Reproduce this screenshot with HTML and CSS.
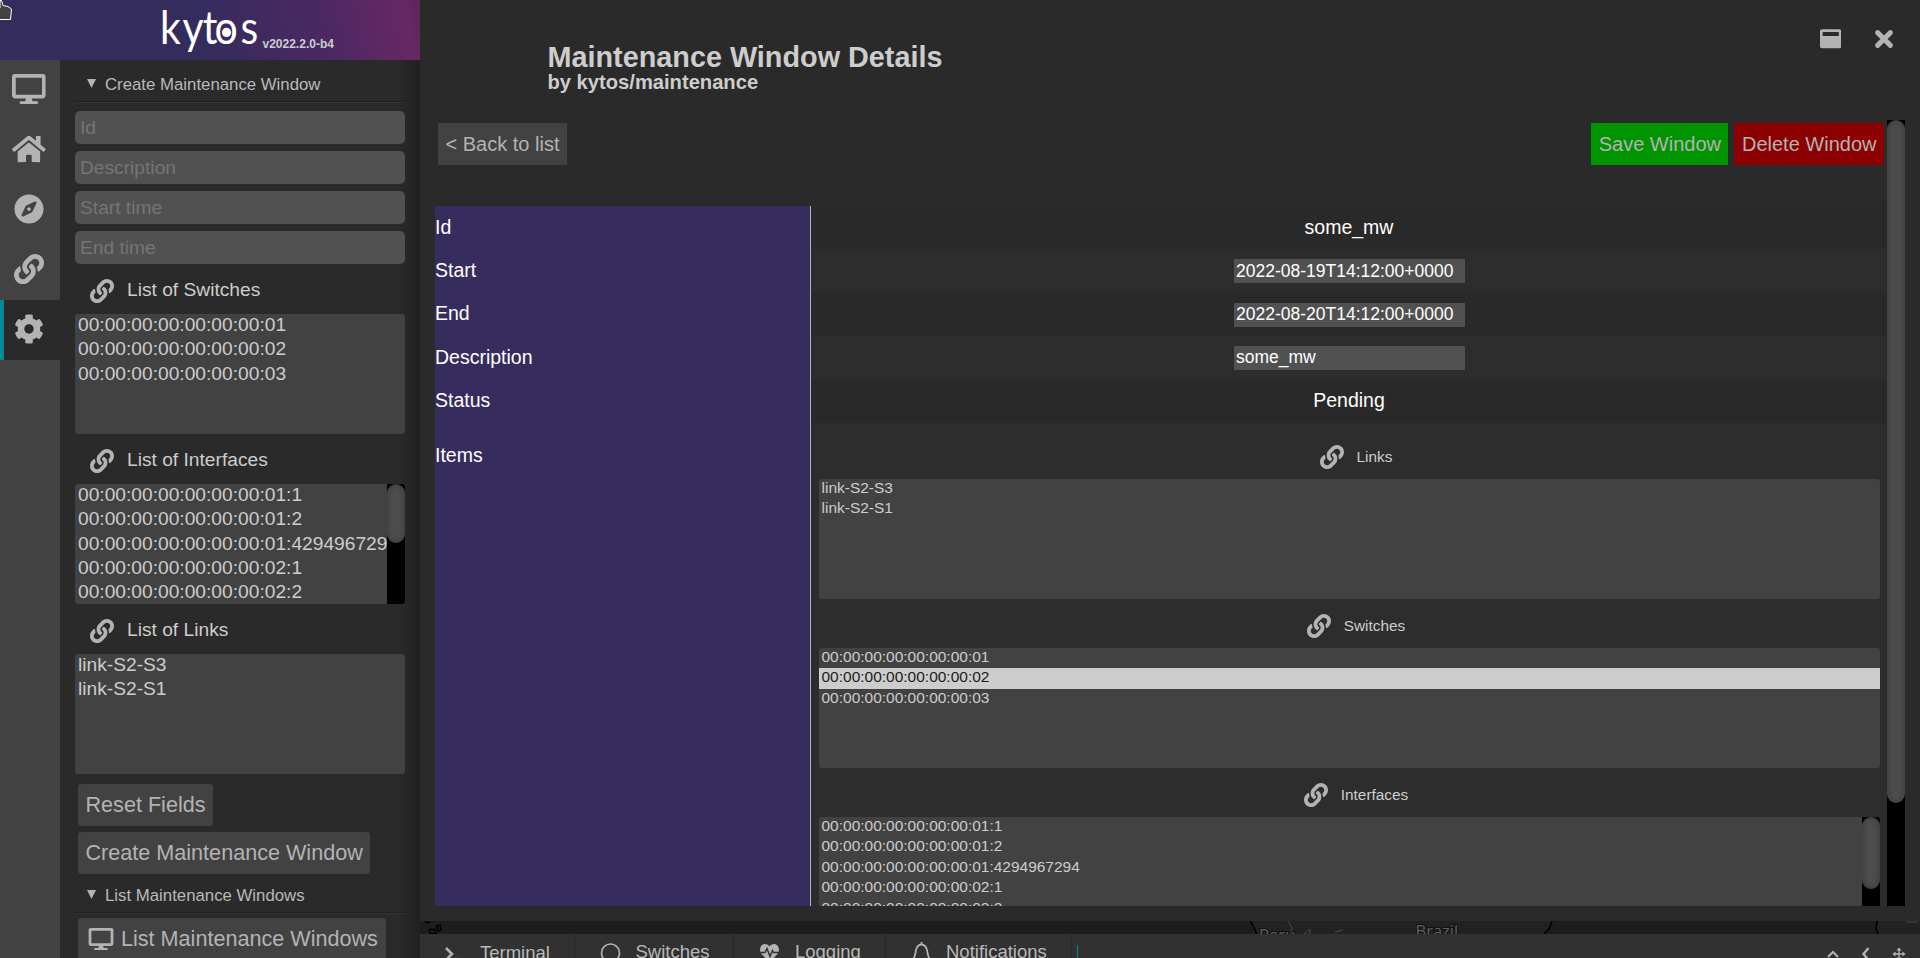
FILE: index.html
```html
<!DOCTYPE html>
<html lang="en">
<head>
<meta charset="utf-8">
<title>Kytos</title>
<link rel="stylesheet" href="styles.css">
</head>
<body>
<svg class="defs" width="0" height="0">
  <symbol id="desktop" viewBox="0 0 576 512"><path d="M528 0H48C21.500 0 0 21.500 0 48v320c0 26.500 21.500 48 48 48h192l-16 48h-72c-13.300 0-24 10.700-24 24s10.700 24 24 24h272c13.300 0 24-10.700 24-24s-10.700-24-24-24h-72l-16-48h192c26.500 0 48-21.500 48-48V48c0-26.500-21.500-48-48-48zm-16 352H64V64h448v288z"/></symbol>
  <symbol id="home" viewBox="0 0 576 512"><path d="M280.37 148.26L96 300.11V464a16 16 0 0 0 16 16l112.06-.29a16 16 0 0 0 15.92-16V368a16 16 0 0 1 16-16h64a16 16 0 0 1 16 16v95.64a16 16 0 0 0 16 16.05L464 480a16 16 0 0 0 16-16V300L295.67 148.26a12.19 12.19 0 0 0-15.3 0zM571.6 251.47L488 182.56V44.05a12 12 0 0 0-12-12h-56a12 12 0 0 0-12 12v72.61L318.47 43a48 48 0 0 0-61 0L4.34 251.47a12 12 0 0 0-1.6 16.9l25.5 31A12 12 0 0 0 45.15 301l235.22-193.74a12.19 12.19 0 0 1 15.3 0L530.9 301a12 12 0 0 0 16.9-1.6l25.5-31a12 12 0 0 0-1.7-16.93z"/></symbol>
  <symbol id="compass" viewBox="0 0 496 512"><path d="M225.38 233.37c-12.5 12.5-12.5 32.76 0 45.25 12.49 12.5 32.76 12.5 45.25 0 12.5-12.5 12.5-32.76 0-45.25-12.5-12.49-32.76-12.49-45.25 0zM248 8C111.03 8 0 119.03 0 256s111.03 248 248 248 248-111.03 248-248S384.97 8 248 8zm126.14 148.05L308.17 300.4a31.938 31.938 0 0 1-15.77 15.77l-144.34 65.97c-16.65 7.61-33.81-9.55-26.2-26.2l65.98-144.35a31.938 31.938 0 0 1 15.77-15.77l144.34-65.97c16.65-7.6 33.8 9.55 26.19 26.2z"/></symbol>
  <symbol id="link" viewBox="0 0 512 512"><path d="M326.612 185.391c59.747 59.809 58.927 155.698.36 214.59-.11.12-.24.25-.36.37l-67.2 67.2c-59.27 59.27-155.699 59.262-214.96 0-59.27-59.26-59.27-155.7 0-214.96l37.106-37.106c9.84-9.84 26.786-3.3 27.294 10.606.648 17.722 3.826 35.527 9.69 52.721 1.986 5.822.567 12.262-3.783 16.612l-13.087 13.087c-28.026 28.026-28.905 73.66-1.155 101.96 28.024 28.579 74.086 28.749 102.325.51l67.2-67.19c28.191-28.191 28.073-73.757 0-101.83-3.701-3.694-7.429-6.564-10.341-8.569a16.037 16.037 0 0 1-6.947-12.606c-.396-10.567 3.348-21.456 11.698-29.806l21.054-21.055c5.521-5.521 14.182-6.199 20.584-1.731a152.482 152.482 0 0 1 20.522 17.197zM467.547 44.449c-59.261-59.262-155.69-59.27-214.96 0l-67.2 67.2c-.12.12-.25.25-.36.37-58.566 58.892-59.387 154.781.36 214.59a152.454 152.454 0 0 0 20.521 17.196c6.402 4.468 15.064 3.789 20.584-1.731l21.054-21.055c8.35-8.35 12.094-19.239 11.698-29.806a16.037 16.037 0 0 0-6.947-12.606c-2.912-2.005-6.64-4.875-10.341-8.569-28.073-28.073-28.191-73.639 0-101.83l67.2-67.19c28.239-28.239 74.3-28.069 102.325.51 27.75 28.3 26.872 73.934-1.155 101.96l-13.087 13.087c-4.35 4.35-5.769 10.79-3.783 16.612 5.864 17.194 9.042 34.999 9.69 52.721.509 13.906 17.454 20.446 27.294 10.606l37.106-37.106c59.271-59.259 59.271-155.699.001-214.959z"/></symbol>
  <symbol id="cog" viewBox="0 0 512 512"><path d="M487.4 315.7l-42.6-24.6c4.3-23.2 4.3-47 0-70.2l42.6-24.6c4.9-2.8 7.1-8.6 5.5-14-11.1-35.6-30-67.8-54.7-94.6-3.8-4.1-10-5.1-14.8-2.3L380.8 110c-17.9-15.4-38.5-27.3-60.8-35.1V25.8c0-5.6-3.9-10.5-9.4-11.7-36.7-8.2-74.3-7.8-109.2 0-5.5 1.2-9.4 6.1-9.4 11.7V75c-22.2 7.9-42.8 19.8-60.8 35.1L88.7 85.5c-4.9-2.8-11-1.9-14.8 2.3-24.7 26.7-43.6 58.9-54.7 94.6-1.7 5.4.6 11.2 5.5 14L67.3 221c-4.3 23.2-4.3 47 0 70.2l-42.6 24.6c-4.9 2.8-7.1 8.6-5.5 14 11.1 35.6 30 67.8 54.7 94.6 3.8 4.1 10 5.1 14.8 2.3l42.6-24.6c17.9 15.4 38.5 27.3 60.8 35.1v49.2c0 5.6 3.9 10.5 9.4 11.7 36.7 8.2 74.3 7.8 109.2 0 5.5-1.200 9.4-6.1 9.4-11.7v-49.2c22.2-7.9 42.8-19.8 60.8-35.1l42.6 24.6c4.9 2.8 11 1.9 14.8-2.3 24.7-26.7 43.6-58.9 54.7-94.6 1.5-5.500-.7-11.3-5.600-14.100zM256 336c-44.1 0-80-35.9-80-80s35.9-80 80-80 80 35.9 80 80-35.9 80-80 80z"/></symbol>
  <symbol id="window" viewBox="0 0 512 512"><path d="M464 32H48C21.500 32 0 53.500 0 80v352c0 26.500 21.500 48 48 48h416c26.500 0 48-21.500 48-48V80c0-26.500-21.500-48-48-48zm-16 160H64v-84c0-6.600 5.400-12 12-12h360c6.600 0 12 5.400 12 12v84z"/></symbol>
  <symbol id="times" viewBox="0 0 16 16"><path d="M2.900 2.900L13.100 13.100M13.100 2.900L2.900 13.100" fill="none" stroke="currentColor" stroke-width="4" stroke-linecap="round"/></symbol>
</svg>

<div class="app">
  <aside class="side">
    <header class="brand">
      <svg class="logo" viewBox="0 0 100 60" width="100" height="60">
        <text class="wordmark" transform="scale(.9 1)" x="0 25 47.500 60.700 89.500" y="43.500">kytos</text>
        <circle cx="66.500" cy="32.400" r="4.600"/>
      </svg>
      <span class="version">v2022.2.0-b4</span>
    </header>
    <div class="side-body">
      <nav class="rail">
        <a class="rail-item"><svg class="rail-wide"><use href="#desktop"/></svg></a>
        <a class="rail-item"><svg class="rail-wide"><use href="#home"/></svg></a>
        <a class="rail-item"><svg class="rail-icon"><use href="#compass"/></svg></a>
        <a class="rail-item"><svg class="rail-icon"><use href="#link"/></svg></a>
        <a class="rail-item active"><svg class="rail-icon"><use href="#cog"/></svg></a>
      </nav>
      <section class="toolbar">
        <h3 class="fold"><svg class="caret" viewBox="0 0 9 9"><path d="M0 0h9L4.500 9z"/></svg>Create Maintenance Window</h3>
        <div class="fields">
          <input class="field" placeholder="Id">
          <input class="field" placeholder="Description">
          <input class="field" placeholder="Start time">
          <input class="field" placeholder="End time">
        </div>
        <div class="label"><svg class="link-icon"><use href="#link"/></svg>List of Switches</div>
        <div class="list big">
          <div class="opts"><div>00:00:00:00:00:00:00:01</div><div>00:00:00:00:00:00:00:02</div><div>00:00:00:00:00:00:00:03</div></div>
        </div>
        <div class="label"><svg class="link-icon"><use href="#link"/></svg>List of Interfaces</div>
        <div class="list big">
          <div class="opts"><div>00:00:00:00:00:00:00:01:1</div><div>00:00:00:00:00:00:00:01:2</div><div>00:00:00:00:00:00:00:01:4294967294</div><div>00:00:00:00:00:00:00:02:1</div><div>00:00:00:00:00:00:00:02:2</div></div>
          <div class="track"><div class="thumb thumb-side"></div></div>
        </div>
        <div class="label"><svg class="link-icon"><use href="#link"/></svg>List of Links</div>
        <div class="list big">
          <div class="opts"><div>link-S2-S3</div><div>link-S2-S1</div></div>
        </div>
        <div class="actions">
          <button class="btn">Reset Fields</button>
          <button class="btn">Create Maintenance Window</button>
        </div>
        <h3 class="fold second"><svg class="caret" viewBox="0 0 9 9"><path d="M0 0h9L4.500 9z"/></svg>List Maintenance Windows</h3>
        <div class="actions last">
          <button class="btn wide"><svg class="btn-icon"><use href="#desktop"/></svg>List Maintenance Windows</button>
        </div>
      </section>
    </div>
  </aside>

  <main class="main">
    <section class="window">
      <header class="window-head">
        <div class="titles">
          <h1 class="title">Maintenance Window Details</h1>
          <h2 class="subtitle">by kytos/maintenance</h2>
        </div>
        <div class="controls">
          <svg class="ctl-window"><use href="#window"/></svg>
          <svg class="ctl-close"><use href="#times"/></svg>
        </div>
      </header>
      <div class="scroll">
        <div class="content">
          <div class="bar">
            <button class="btn flat">&lt; Back to list</button>
            <span class="bar-right">
              <button class="btn flat save">Save Window</button>
              <button class="btn flat delete">Delete Window</button>
            </span>
          </div>
          <div class="details">
            <div class="row"><div class="th">Id</div><div class="td">some_mw</div></div>
            <div class="row"><div class="th">Start</div><div class="td"><input class="edit" value="2022-08-19T14:12:00+0000"></div></div>
            <div class="row"><div class="th">End</div><div class="td"><input class="edit" value="2022-08-20T14:12:00+0000"></div></div>
            <div class="row"><div class="th">Description</div><div class="td"><input class="edit" value="some_mw"></div></div>
            <div class="row status"><div class="th">Status</div><div class="td">Pending</div></div>
            <div class="row items">
              <div class="th">Items</div>
              <div class="td">
                <div class="group"><svg class="link-icon"><use href="#link"/></svg>Links</div>
                <div class="list small">
                  <div class="opts"><div>link-S2-S3</div><div>link-S2-S1</div></div>
                </div>
                <div class="group"><svg class="link-icon"><use href="#link"/></svg>Switches</div>
                <div class="list small">
                  <div class="opts"><div>00:00:00:00:00:00:00:01</div><div class="selected">00:00:00:00:00:00:00:02</div><div>00:00:00:00:00:00:00:03</div></div>
                </div>
                <div class="group"><svg class="link-icon"><use href="#link"/></svg>Interfaces</div>
                <div class="list small">
                  <div class="opts"><div>00:00:00:00:00:00:00:01:1</div><div>00:00:00:00:00:00:00:01:2</div><div>00:00:00:00:00:00:00:01:4294967294</div><div>00:00:00:00:00:00:00:02:1</div><div>00:00:00:00:00:00:00:02:2</div></div>
                  <div class="track"><div class="thumb thumb-inner"></div></div>
                </div>
              </div>
            </div>
          </div>
        </div>
        <div class="track"><div class="thumb thumb-main"></div></div>
      </div>
    </section>

    <svg class="map" viewBox="420 921 1500 13" width="1500" height="13">
      <path class="land" d="M1250.500 921L1257 934H1544L1549 927L1552 921zM1877 921L1876 928L1878 934H1920V921z"/>
      <path class="coast" d="M1250.500 921L1257 934M1552 921L1549 929L1544 934M1877 921L1876 928L1878 934M425 921l3 2 2-2M429.500 929.500h5.500l1 4h-6zM436.500 926l3.500-1 1 5-3 1z"/>
      <path class="border" d="M1288 921l4 7-1 6M1335 932l8-2M1906 922h12M1304 934l6-5v5"/>
      <text class="place" x="1259" y="941">Peru</text>
      <text class="place" x="1415.500" y="936.500">Brazil</text>
    </svg>

    <footer class="tabs">
      <a class="tab t1"><svg class="tab-icon" viewBox="0 0 24 24"><path class="ln" d="M6 6l6 6-6 6" stroke-width="2.600"/><path class="dim" d="M13 16.500h7"/></svg>Terminal</a>
      <a class="tab t2"><svg class="tab-icon" viewBox="0 0 24 24"><circle class="ln" cx="11.500" cy="12" r="9" stroke-width="1.700"/></svg>Switches</a>
      <a class="tab t3"><svg class="tab-icon" viewBox="0 0 24 24"><path d="M11.500 21.500L3.500 13C-1 7 5.500-1 11.500 5.200C17.500-1 24 7 19.500 13z"/><path class="cut" d="M2 11.500h5l2-4 3 8 2.500-6 1 2h5.500"/></svg>Logging</a>
      <a class="tab t4"><svg class="tab-icon" viewBox="0 0 24 24"><path class="ln" d="M3 18c3-3 2-7 3.500-10.500C8 4 10 3.500 11.500 3.500S15 4 16.500 7.500C18 11 17 15 20 18zM11.500 1v2.500" stroke-width="1.800"/></svg>Notifications</a>
      <div class="mark"></div>
      <div class="tools">
        <svg class="tool" viewBox="0 0 14 14"><path class="ln" d="M2 10l5-5 5 5" stroke-width="2"/></svg>
        <svg class="tool" viewBox="0 0 14 14"><path class="ln" d="M9.500 1l-5 6 5 6" stroke-width="2.400"/></svg>
        <svg class="tool" viewBox="0 0 14 14"><path class="ln" d="M7 2v10M2 7h10" stroke-width="1.300"/><path d="M7 .5l2.600 3H4.400zM7 13.500l2.600-3H4.400zM.5 7l3-2.600v5.200zM13.500 7l-3-2.600v5.200z"/></svg>
      </div>
    </footer>
  </main>
</div>

<svg class="pointer" viewBox="0 0 14 22" width="14" height="22"><path d="M0 8V0.500H1.500L3 5.500L8 6.500L11.500 9L10.500 19.500H0"/></svg>
</body>
</html>
```
FILE: styles.css
```css
* { box-sizing: border-box; }

body {
  margin: 0;
  height: 958px;
  overflow: hidden;
  background: #1e1e1e;
  color: #cdcdcd;
  font-family: "Liberation Sans", Arial, sans-serif;
  font-size: 19.2px;
}

h1, h2, h3 { margin: 0; }

svg { fill: #b3b3b3; color: #b3b3b3; flex: none; }

input, button {
  font-family: inherit;
  border: 0;
  margin: 0;
  padding: 0;
  outline: 0;
}

.defs { position: absolute; }

.app { display: flex; width: 1920px; height: 958px; overflow: hidden; }

/* left side */
.side { display: flex; flex-direction: column; width: 420px; flex: none; height: 958px; }

.brand {
  display: flex;
  height: 60px;
  flex: none;
  padding-left: 160px;
  background: linear-gradient(78deg, #352c5e 0%, #352c5e 48%, #4b2862 76%, #672864 96%, #5d245a 100%);
}

.logo { fill: #fff; }
.wordmark { font-family: Lato, sans-serif; font-size: 45.5px; fill: #fff; }
.version { margin-left: 2.500px; font-size: 12px; font-weight: bold; line-height: 14px; padding-top: 37px; }

.side-body { display: flex; height: 898px; overflow: hidden; }

.rail { width: 60px; flex: none; background: #424242; }
.rail-item {
  display: flex;
  align-items: center;
  justify-content: center;
  height: 60px;
  padding-right: 1.500px;
}
.rail-item.active { background: #2a2a2a; border-left: 4px solid #008b97; padding-right: 5.500px; }
.rail-icon { width: 30px; height: 30px; margin-top: -2px; }
.rail-wide { width: 33.750px; height: 30px; margin-top: -2px; }

.toolbar {
  width: 360px;
  padding: 0 15px;
  background: linear-gradient(90deg, #2a2a2a 94%, #202020 100%);
}

.fold {
  display: flex;
  align-items: center;
  height: 42px;
  padding: 8.500px 0 0 12px;
  border-bottom: 1px solid #212121;
  box-shadow: 0 1px #333;
  font-size: 16.800px;
  font-weight: normal;
  color: #b9b9b9;
}
.fold.second { height: 39px; padding-top: 5.500px; }
.caret { width: 9px; height: 9px; margin: -2px 9px 0 0; }

.fields { display: grid; gap: 7.500px; padding-top: 9px; }
.field {
  width: 330px;
  height: 32.600px;
  padding: 1px 5px 0;
  border-radius: 5px;
  background: #515151;
  font-size: 19.200px;
  color: #ccc;
}
.field::placeholder { color: #757575; }

.label { display: flex; align-items: center; height: 50px; padding: 2px 0 0 2px; }
.link-icon { width: 24px; height: 24px; margin: 0 13px; }
.label .link-icon { margin-top: 2px; }

.list { display: flex; height: 120px; border-radius: 3px; background: #424242; overflow: hidden; }
.opts { flex: 1; overflow: hidden; white-space: nowrap; }
.opts div { padding-left: 3px; }
.big .opts div { height: 24.400px; line-height: 21px; }
.small .opts div { height: 20.400px; line-height: 17.500px; padding-left: 2.500px; }
.opts .selected { background: #cdcdcd; color: #1c1c1c; }

.track { width: 18px; flex: none; background: #000; }
.thumb { border-radius: 9px; background: #4d4d4d; box-shadow: inset 0 0 6px rgba(0, 0, 0, .3); }
.thumb-side { height: 59px; }
.thumb-inner { height: 72px; }
.thumb-main { height: 683px; }

.actions { display: flex; flex-direction: column; align-items: flex-start; gap: 6px; padding: 10px 0 0 3px; }
.actions.last { padding-top: 5px; }
.btn {
  height: 42px;
  padding: 0 7.500px;
  border-radius: 3px;
  background: #424242;
  color: #b3b3b3;
  font-size: 21.600px;
}
.btn.wide { display: flex; align-items: center; padding: 0 8px 0 10px; }
.btn-icon { width: 26px; height: 22px; margin-right: 7px; }

/* right side */
.main { display: flex; flex-direction: column; width: 1500px; height: 958px; overflow: hidden; background: #1d1d1d; }
.window { display: flex; flex-direction: column; height: 921px; flex: none; padding: 0 15px 15px; background: #2a2a2a; }
.window-head { display: flex; justify-content: space-between; height: 120px; flex: none; padding: 39px 11.500px 0 112.500px; }
.title { font-size: 28.800px; line-height: 36px; }
.subtitle { font-size: 20.160px; line-height: 14px; }
.controls { display: flex; align-items: center; gap: 32.500px; height: 24px; margin-top: -12px; }
.ctl-window { width: 21.500px; height: 21.500px; }
.ctl-close { width: 20px; height: 20px; }

.scroll { display: flex; height: 786px; overflow: hidden; }
.content { width: 1452px; flex: none; }
.bar { display: flex; justify-content: space-between; padding: 3px; height: 86px; }
.bar-right { display: flex; gap: 6px; }
.btn.flat { border-radius: 0; font-size: 20px; }
.save { background: #009400; }
.delete { background: #8b0000; }

.details { color: #fff; font-size: 19.5px; }
.row { display: flex; height: 43.200px; }
.row.status { height: 44.200px; }
.row:nth-child(odd) .td { background: #292929; }
.row:nth-child(even) .td { background: #2d2d2d; }
.th {
  display: flex;
  align-items: center;
  width: 376px;
  flex: none;
  border-right: 1px solid #b3b3b3;
  background: #372c5e;
}
.td { display: flex; align-items: center; justify-content: center; flex: 1; }
.edit {
  width: 231px;
  height: 24px;
  padding: 0 2.500px;
  margin-top: 1.200px;
  background: #515151;
  color: #fff;
  font-size: 17.500px;
}
.items { height: 560px; }
.items .th { align-items: flex-start; padding-top: 21px; }
.items .td { display: block; padding: 7px 7px 0 8px; color: #cdcdcd; font-size: 15.490px; }
.group {
  display: flex;
  align-items: center;
  justify-content: center;
  height: 44px;
  margin-top: 5px;
  font-size: 15.360px;
}

.map { display: block; }
.land { fill: #222; }
.coast { fill: none; stroke: #000; stroke-width: 1.600; }
.border { fill: none; stroke: #4a4a4a; }
.place { font-family: "Open Sans", sans-serif; font-size: 16.5px; fill: #606060; stroke: #111; stroke-width: 2; paint-order: stroke; }

.tabs { display: flex; height: 60px; flex: none; background: #313131; color: #b9b9b9; font-size: 18.500px; }
.tab { display: flex; align-items: flex-start; flex: none; padding-top: 7px; border-right: 1px solid #282828; line-height: 22px; }
.tab-icon { width: 24px; height: 24px; }
.t1 { width: 155px; padding-left: 20px; padding-top: 8px; }
.t1 .tab-icon { margin-right: 16px; }
.t2 { width: 159px; padding-left: 24px; }
.t2 .tab-icon { margin-right: 12.500px; }
.t3 { width: 152px; padding-left: 24px; }
.t3 .tab-icon { margin-right: 13px; }
.t4 { width: 186px; padding-left: 23.500px; }
.t4 .tab-icon { margin-right: 12.500px; }
.ln { fill: none; stroke: #b3b3b3; }
.dim { fill: none; stroke: #5a5a5a; stroke-width: 1.500; }
.cut { fill: none; stroke: #313131; stroke-width: 1.500; }
.mark { width: 1px; height: 30px; margin: 11px 0 0 4.500px; background: #008b97; }
.tools { display: flex; gap: 19px; margin: 13px 14px 0 auto; }
.tool { width: 14px; height: 14px; }

.pointer { position: absolute; left: 0; top: 0; }
.pointer path { fill: #424242; stroke: #fff; stroke-width: 1; }
```
